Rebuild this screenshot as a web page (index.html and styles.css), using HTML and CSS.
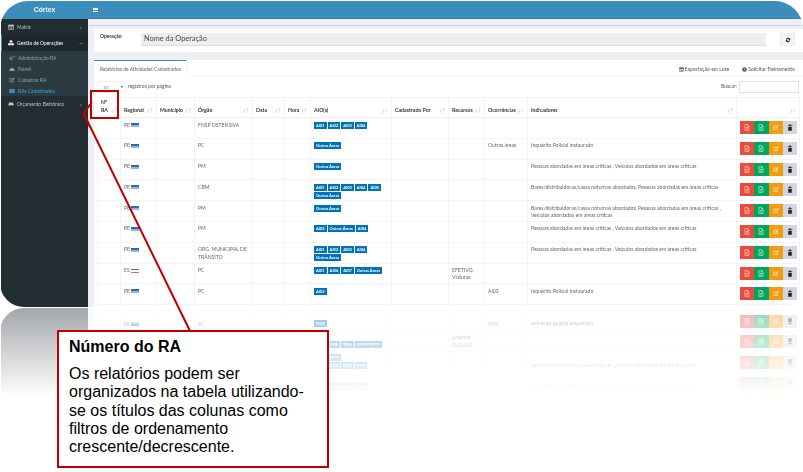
FILE: index.html
```html
<!DOCTYPE html>
<html lang="pt-BR">
<head>
<meta charset="utf-8">
<title>Córtex</title>
<link rel="stylesheet" href="styles.css">
</head>
<body>
<svg class="defs" width="0" height="0" aria-hidden="true">
  <symbol id="i-file" viewBox="0 0 10 12"><path d="M1.5 1h4.500l2.500 2.500v7.500h-7z" fill="none" stroke="currentColor" stroke-width="1.100"/><path d="M6 1v2.500h2.500" fill="none" stroke="currentColor"/><path d="M3 6h4M3 8.500h4" stroke="currentColor" stroke-width="1.100"/></symbol>
  <symbol id="i-edit" viewBox="0 0 12 12"><path d="M9 7v3H1.500V3H7" fill="none" stroke="currentColor" stroke-width="1.300"/><path d="M4.500 8l.5-2 5-5 1.500 1.500-5 5z" fill="currentColor"/></symbol>
  <symbol id="i-trash" viewBox="0 0 10 12"><path d="M1 2.500h8v1H1zM3.500 1h3v1.500h-3zM2 4.500h6v7H2z" fill="currentColor"/></symbol>
  <symbol id="i-cal" viewBox="0 0 12 12"><path d="M1 2h10v9H1z" fill="none" stroke="currentColor" stroke-width="1.200"/><path d="M1 2h10v3H1zM3 1h1v2H3zM8 1h1v2H8zM3 6.500h6v1H3zM3 8.500h6v1H3z" fill="currentColor"/></symbol>
  <symbol id="i-cubes" viewBox="0 0 12 12"><path d="M6 .5l2.700 1.200v2.800L6 5.700 3.300 4.500V1.700zM3 6l2.700 1.200V10L3 11.200.3 10V7.200zM9 6l2.700 1.200V10L9 11.200 6.300 10V7.200z" fill="currentColor"/></symbol>
  <symbol id="i-cog" viewBox="0 0 12 12"><circle cx="4" cy="7" r="2.500" fill="none" stroke="currentColor" stroke-width="1.600"/><circle cx="9.500" cy="3" r="1.500" fill="none" stroke="currentColor"/></symbol>
  <symbol id="i-dash" viewBox="0 0 12 12"><path d="M1 9a5 5 0 1 1 10 0v1H1z" fill="currentColor"/></symbol>
  <symbol id="i-table" viewBox="0 0 12 12"><path d="M.5 2h11v8H.5z" fill="currentColor"/></symbol>
  <symbol id="i-car" viewBox="0 0 12 12"><path d="M2.500 3h7L11 6v3.500H9.500V8.500h-7v1H1V6z" fill="currentColor"/></symbol>
  <symbol id="i-q" viewBox="0 0 12 12"><circle cx="6" cy="6" r="5.500" fill="currentColor"/><path d="M4.500 4.500A1.500 1.500 0 1 1 6 6.500V7.500M6 8.500v1" fill="none" stroke="#fff" stroke-width="1.200"/></symbol>
  <symbol id="i-sync" viewBox="0 0 12 12"><path d="M2 5a4 4 0 0 1 7-2l1.500-1v4h-4l1.300-1.200A2.500 2.500 0 0 0 3.500 5.500zM10 7a4 4 0 0 1-7 2l-1.500 1V6h4L4.200 7.200a2.500 2.500 0 0 0 4.300-.7z" fill="currentColor"/></symbol>
</svg>

<div class="frame">
  <aside class="side">
    <div class="brand">Córtex</div>
    <ul class="menu">
      <li class="item"><svg class="mi"><use href="#i-cal"/></svg><span class="lbl">Matriz</span><span class="chev">‹</span></li>
      <li class="item active"><svg class="mi"><use href="#i-cubes"/></svg><span class="lbl">Gestão de Operações</span><span class="chev down">‹</span></li>
      <li class="subwrap">
        <ul class="sub">
          <li class="subitem"><svg class="mi"><use href="#i-cog"/></svg>Administração RA</li>
          <li class="subitem"><svg class="mi"><use href="#i-dash"/></svg>Painel</li>
          <li class="subitem"><svg class="mi"><use href="#i-edit"/></svg>Cadastrar RA</li>
          <li class="subitem current"><svg class="mi"><use href="#i-table"/></svg>RAs Cadastrados</li>
        </ul>
      </li>
      <li class="item"><svg class="mi"><use href="#i-car"/></svg><span class="lbl">Orçamento Eletrônico</span><span class="chev">‹</span></li>
    </ul>
  </aside>

  <div class="main">
    <header class="topbar"><span class="burger"></span></header>
    <div class="crumb"></div>
    <div class="content">
      <section class="op-card">
        <span class="op-label">Operação</span>
        <div class="op-input">Nome da Operação</div>
        <button class="op-btn"><svg class="sync"><use href="#i-sync"/></svg></button>
      </section>

      <section class="panel">
        <div class="tabs">
          <div class="tab">Relatórios de Atividades Cadastrados</div>
          <div class="links">
            <span class="link"><svg class="li"><use href="#i-cal"/></svg>Exportação em Lote</span>
            <span class="link"><svg class="li"><use href="#i-q"/></svg>Solicitar Treinamento</span>
          </div>
        </div>
        <div class="tools">
          <div class="len"><span class="sel"><span>10</span><span class="caret"></span></span>registros por página</div>
          <div class="search">Buscar:<span class="search-box"></span></div>
        </div>

        <table class="grid">
          <colgroup>
            <col class="c1"><col class="c2"><col class="c3"><col class="c4"><col class="c5"><col class="c6"><col class="c7"><col class="c8"><col class="c9"><col class="c10"><col class="c11"><col class="c12">
          </colgroup>
          <thead>
            <tr>
              <th><div class="th"><span>Nº<br>RA</span><i>↓↑</i></div></th>
              <th><div class="th"><span>Regional</span><i>↓↑</i></div></th>
              <th><div class="th"><span>Município</span><i>↓↑</i></div></th>
              <th><div class="th"><span>Órgão</span><i>↓↑</i></div></th>
              <th><div class="th"><span>Data</span><i>↓↑</i></div></th>
              <th><div class="th"><span>Hora</span><i>↓↑</i></div></th>
              <th><div class="th"><span>AIO(s)</span><i>↓↑</i></div></th>
              <th><div class="th"><span>Cadastrado Por</span><i>↓↑</i></div></th>
              <th><div class="th"><span>Recursos</span><i>↓↑</i></div></th>
              <th><div class="th"><span>Ocorrências</span><i>↓↑</i></div></th>
              <th><div class="th"><span>Indicadores</span><i>↓↑</i></div></th>
              <th><div class="th"><span></span><i>↓↑</i></div></th>
            </tr>
          </thead>
          <tbody>
            <tr>
              <td></td><td>PE <span class="flag pe"></span></td><td></td><td>FNSP OSTENSIVA</td><td></td><td></td>
              <td><span class="bd">AI01</span><span class="bd">AI02</span><span class="bd">AI03</span><span class="bd">AI04</span></td>
              <td></td><td></td><td></td><td></td>
              <td class="act"><div class="btns"><span class="b red"><svg><use href="#i-file"/></svg></span><span class="b green"><svg><use href="#i-file"/></svg></span><span class="b orange"><svg><use href="#i-edit"/></svg></span><span class="b gray"><svg><use href="#i-trash"/></svg></span></div></td>
            </tr>
            <tr>
              <td></td><td>PE <span class="flag pe"></span></td><td></td><td>PC</td><td></td><td></td>
              <td><span class="bd">Outras Áreas</span></td>
              <td></td><td></td><td>Outras áreas</td><td>Inquérito Policial instaurado</td>
              <td class="act"><div class="btns"><span class="b red"><svg><use href="#i-file"/></svg></span><span class="b green"><svg><use href="#i-file"/></svg></span><span class="b orange"><svg><use href="#i-edit"/></svg></span><span class="b gray"><svg><use href="#i-trash"/></svg></span></div></td>
            </tr>
            <tr>
              <td></td><td>PE <span class="flag pe"></span></td><td></td><td>PM</td><td></td><td></td>
              <td><span class="bd">Outras Áreas</span></td>
              <td></td><td></td><td></td><td>Pessoas abordadas em áreas críticas , Veículos abordados em áreas críticas</td>
              <td class="act"><div class="btns"><span class="b red"><svg><use href="#i-file"/></svg></span><span class="b green"><svg><use href="#i-file"/></svg></span><span class="b orange"><svg><use href="#i-edit"/></svg></span><span class="b gray"><svg><use href="#i-trash"/></svg></span></div></td>
            </tr>
            <tr>
              <td></td><td>PE <span class="flag pe"></span></td><td></td><td>CBM</td><td></td><td></td>
              <td><span class="bd">AI01</span><span class="bd">AI02</span><span class="bd">AI03</span><span class="bd">AI04</span><span class="bd">AI05</span><span class="bd">Outras Áreas</span></td>
              <td></td><td></td><td></td><td>Bares/distribuidoras/casas noturnas abordados, Pessoas abordadas em áreas críticas</td>
              <td class="act"><div class="btns"><span class="b red"><svg><use href="#i-file"/></svg></span><span class="b green"><svg><use href="#i-file"/></svg></span><span class="b orange"><svg><use href="#i-edit"/></svg></span><span class="b gray"><svg><use href="#i-trash"/></svg></span></div></td>
            </tr>
            <tr>
              <td></td><td>PE <span class="flag pe"></span></td><td></td><td>PM</td><td></td><td></td>
              <td><span class="bd">Outras Áreas</span></td>
              <td></td><td></td><td></td><td>Bares/distribuidoras/casas noturnas abordados, Pessoas abordadas em áreas críticas , Veículos abordados em áreas críticas</td>
              <td class="act"><div class="btns"><span class="b red"><svg><use href="#i-file"/></svg></span><span class="b green"><svg><use href="#i-file"/></svg></span><span class="b orange"><svg><use href="#i-edit"/></svg></span><span class="b gray"><svg><use href="#i-trash"/></svg></span></div></td>
            </tr>
            <tr>
              <td></td><td>PE <span class="flag pe"></span></td><td></td><td>PM</td><td></td><td></td>
              <td><span class="bd">AI03</span><span class="bd">Outras Áreas</span><span class="bd">AI04</span></td>
              <td></td><td></td><td></td><td>Pessoas abordadas em áreas críticas , Veículos abordados em áreas críticas</td>
              <td class="act"><div class="btns"><span class="b red"><svg><use href="#i-file"/></svg></span><span class="b green"><svg><use href="#i-file"/></svg></span><span class="b orange"><svg><use href="#i-edit"/></svg></span><span class="b gray"><svg><use href="#i-trash"/></svg></span></div></td>
            </tr>
            <tr>
              <td></td><td>PE <span class="flag pe"></span></td><td></td><td>ORG. MUNICIPAL DE TRÂNSITO</td><td></td><td></td>
              <td><span class="bd">AI01</span><span class="bd">AI02</span><span class="bd">AI03</span><span class="bd">AI04</span><span class="bd">Outras Áreas</span></td>
              <td></td><td></td><td></td><td>Pessoas abordadas em áreas críticas , Veículos abordados em áreas críticas</td>
              <td class="act"><div class="btns"><span class="b red"><svg><use href="#i-file"/></svg></span><span class="b green"><svg><use href="#i-file"/></svg></span><span class="b orange"><svg><use href="#i-edit"/></svg></span><span class="b gray"><svg><use href="#i-trash"/></svg></span></div></td>
            </tr>
            <tr>
              <td></td><td>ES <span class="flag es"></span></td><td></td><td>PC</td><td></td><td></td>
              <td><span class="bd">AI01</span><span class="bd">AI06</span><span class="bd">AI07</span><span class="bd">Outras Áreas</span></td>
              <td></td><td>EFETIVO, Viaturas</td><td></td><td></td>
              <td class="act"><div class="btns"><span class="b red"><svg><use href="#i-file"/></svg></span><span class="b green"><svg><use href="#i-file"/></svg></span><span class="b orange"><svg><use href="#i-edit"/></svg></span><span class="b gray"><svg><use href="#i-trash"/></svg></span></div></td>
            </tr>
            <tr>
              <td></td><td>PE <span class="flag pe"></span></td><td></td><td>PC</td><td></td><td></td>
              <td><span class="bd">AI03</span></td>
              <td></td><td></td><td>AI03</td><td>Inquérito Policial Instaurado</td>
              <td class="act"><div class="btns"><span class="b red"><svg><use href="#i-file"/></svg></span><span class="b green"><svg><use href="#i-file"/></svg></span><span class="b orange"><svg><use href="#i-edit"/></svg></span><span class="b gray"><svg><use href="#i-trash"/></svg></span></div></td>
            </tr>
          </tbody>
        </table>
      </section>
    </div>
  </div>
</div>

<div class="hilite"></div>
<svg class="arrow" width="803" height="472" viewBox="0 0 803 472" aria-hidden="true">
  <path d="M190 331L84 114M92 102L83.500 113.500L90 127" fill="none" stroke="#c00000" stroke-width="2"/>
</svg>
<div class="callout">
  <h2 class="co-title">Número do RA</h2>
  <p class="co-text">Os relatórios podem ser organizados na tabela utilizando-se os títulos das colunas como filtros de ordenamento crescente/decrescente.</p>
</div>
</body>
</html>
```

FILE: styles.css
```css
* { box-sizing: border-box; }
html, body { margin: 0; padding: 0; background: #fff; }
body { width: 803px; height: 472px; overflow: hidden; position: relative; font-family: "Lato", "Liberation Sans", sans-serif; }
ul { list-style: none; margin: 0; padding: 0; }
.defs { position: absolute; }

.frame {
  display: flex;
  width: 803px;
  height: 306px;
  margin-top: 1px;
  background: #fff;
  border-radius: 28px 28px 24px 24px;
  overflow: hidden;
  -webkit-box-reflect: below 1px linear-gradient(to bottom, transparent 71%, rgba(255,255,255,.42) 100%);
}

/* sidebar */
.side { width: 87px; flex: none; background: #222d32; margin-left: 1px; color: #b8c7ce; font-size: 4.900px; filter: blur(.3px); }
.brand { height: 18px; background: #3c8dbc; color: #f2f7fa; font: 700 6.800px/17px "Liberation Sans", sans-serif; text-align: center; }
.item { display: flex; align-items: center; height: 16px; padding: 0 6px 0 7px; }
.item.active { background: #1e282c; color: #fff; border-left: 1px solid #3c8dbc; padding-left: 6px; }
.lbl { flex: 1; }
.chev { font-size: 7px; line-height: 7px; color: #8aa4af; }
.chev.down { transform: rotate(-90deg); }
.mi { width: 6px; height: 6px; margin-right: 3px; flex: none; color: currentColor; }
.sub { background: #2c3b41; padding: 1px 0 0; color: #8aa4af; }
.subitem { display: flex; align-items: center; height: 11px; padding-left: 8px; }
.subitem .mi { margin-right: 3px; }
.subitem.current { color: #3c8dbc; font-weight: 700; }

/* main */
.main { flex: 1; min-width: 0; display: flex; flex-direction: column; background: #ecf0f5; filter: blur(.3px); }
.topbar { height: 18px; flex: none; background: #3c8dbc; display: flex; align-items: center; padding-left: 5px; border-bottom: 1px solid #367fa9; }
.burger { width: 5px; height: 4px; border-top: 1px solid #fff; border-bottom: 1px solid #fff; }
.burger::after { content: ""; display: block; height: 1px; background: #fff; margin-top: .5px; }
.crumb { height: 7px; border-bottom: 1px solid #d2d6de; background: #ecf0f5; flex: none; }
.content { padding: 3px 0 0 6px; flex: 1; display: flex; flex-direction: column; min-height: 0; }

.op-card { height: 23px; flex: none; background: #fff; display: flex; align-items: flex-start; padding: 4px 8px 0 6px; margin-bottom: 8px; }
.op-label { width: 41px; font-size: 5px; font-weight: 700; color: #333; flex: none; line-height: 7px; }
.op-input { width: 626px; height: 13px; background: #eee; border-bottom: 1px solid #ddd; font: 7.400px/12px "Lato", sans-serif; padding-left: 3px; color: #444; }
.op-btn { width: 15px; height: 13px; margin-left: 14px; border: 1px solid #eee; background: #f4f4f4; padding: 0; display: flex; align-items: center; justify-content: center; color: #333; }
.sync { width: 6px; height: 6px; }

.panel { background: #fff; flex: 1; }
.tabs { display: flex; justify-content: space-between; height: 17px; border-bottom: 1px solid #f4f4f4; }
.tab { width: 93px; height: 17px; border-top: 1.500px solid #3c8dbc; border-right: 1px solid #f4f4f4; font-size: 5px; color: #666; padding: 5px 0 0 6px; white-space: nowrap; background: #fff; }
.links { display: flex; gap: 13px; padding: 6px 8px 0 0; font-size: 5.100px; color: #555; }
.link { display: flex; align-items: flex-start; }
.li { width: 5px; height: 5px; margin: .5px 1px 0 0; }

.tools { display: flex; justify-content: space-between; height: 20px; padding: 4px 4px 0 3px; font-size: 5px; color: #555; }
.len { display: flex; align-items: flex-start; line-height: 11px; }
.sel { display: flex; justify-content: space-between; align-items: center; width: 29px; height: 12px; border: 1px solid #f0f0f0; padding: 0 2px 0 5px; margin-right: 2px; color: #888; font-size: 4.500px; }
.caret { width: 0; height: 0; border: 1.500px solid transparent; border-top: 2.500px solid #444; border-bottom: 0; }
.search { display: flex; align-items: flex-start; line-height: 11px; }
.search-box { width: 60px; height: 12px; border: 1px solid #e3e3e3; margin-left: 2px; }

/* table */
.grid { table-layout: fixed; border-collapse: collapse; margin-left: 3px; width: 702px; font-size: 5.100px; color: #666; }
.c1 { width: 23px; } .c2 { width: 36px; } .c3 { width: 38px; } .c4 { width: 58px; }
.c5 { width: 32px; } .c6 { width: 26px; } .c7 { width: 81px; } .c8 { width: 57px; }
.c9 { width: 36px; } .c10 { width: 43px; } .c11 { width: 209px; } .c12 { width: 63px; }
.grid th, .grid td { border: 1px solid #f4f4f4; padding: 0; }
.grid thead tr { height: 20px; }
.grid th { vertical-align: bottom; border-bottom: 1px solid #f0f0f0; font-weight: 700; color: #333; text-align: left; }
.th { display: flex; justify-content: space-between; align-items: flex-end; padding: 0 3px 3px; line-height: 8px; white-space: nowrap; font-size: 5.200px; }
.th i { font-style: normal; font-weight: 400; color: #c8c8c8; font-size: 5px; letter-spacing: -.5px; }
.grid tbody tr { height: 20.800px; }
.grid td { vertical-align: top; padding: 3.500px 3px 0; line-height: 7.300px; }
.grid td.act { padding: 3px 0 0 3px; }

.flag { display: inline-block; width: 8px; height: 4px; vertical-align: -.500px; background: linear-gradient(#2a6cb4 60%, #8fb6dc 60%); }
.flag.es { background: linear-gradient(#4a73b8 35%, #fff 35%, #fff 65%, #e0607e 65%); }

.bd { display: inline-block; height: 7px; padding: 0 2px; margin: 0 1px 1px 0; background: #0073b7; color: #fff; font-size: 4px; font-weight: 700; line-height: 7px; vertical-align: top; }

.btns { display: flex; width: 57px; height: 13px; }
.b { width: 14.250px; height: 13px; display: flex; align-items: center; justify-content: center; color: rgba(255,255,255,.8); }
.b svg { width: 6px; height: 7px; }
.red { background: #e74c3c; }
.green { background: #00a65a; }
.orange { background: #f39c12; }
.gray { background: #d2d6de; color: #222; }

/* annotation */
.hilite { position: absolute; left: 90px; top: 90px; width: 29px; height: 29px; border: 2px solid #c00000; }
.arrow { position: absolute; left: 0; top: 0; pointer-events: none; }
.callout { position: absolute; left: 57px; top: 330px; width: 272px; height: 138px; background: #fff; border: 2px solid #c00000; padding: 6px 20px 0 10px; font-family: "Liberation Sans", Arial, sans-serif; color: #000; }
.co-title { margin: 0 0 9px; font-size: 16px; line-height: 18px; font-weight: 700; }
.co-text { margin: 0; font-size: 16px; line-height: 18.300px; }
```
